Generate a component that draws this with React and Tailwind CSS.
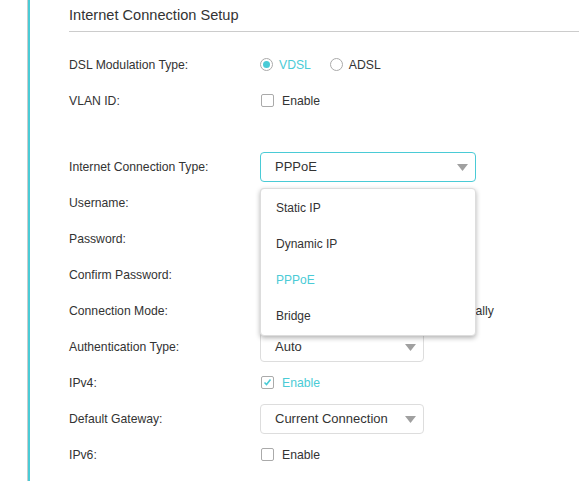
import React from 'react';

const CYAN = '#4acbd6';

const Arrow = () => (
  <svg width="11" height="7" viewBox="0 0 11 7" className="shrink-0">
    <path d="M0 0h11L5.5 7z" fill="#a0a0a0" />
  </svg>
);

const Radio = ({ checked, label }) => (
  <label className="flex items-center gap-[6px]">
    <span className="w-[13px] h-[13px] rounded-full border border-[#aaa] flex items-center justify-center bg-white">
      {checked && <span className="w-[7px] h-[7px] rounded-full bg-[#4acbd6]" />}
    </span>
    <span className={checked ? 'text-[#4acbd6]' : 'text-[#333]'}>{label}</span>
  </label>
);

const Checkbox = ({ checked, label }) => (
  <label className="flex items-center gap-[8px] pl-[1px]">
    <span className="w-[13px] h-[13px] rounded-[2px] border border-[#aaa] flex items-center justify-center bg-white">
      {checked && (
        <svg width="9" height="9" viewBox="0 0 9 9">
          <path d="M1.5 4.5l2 2 4-5" fill="none" stroke={CYAN} strokeWidth="1.6" />
        </svg>
      )}
    </span>
    <span className={checked ? 'text-[#4acbd6]' : 'text-[#333]'}>{label}</span>
  </label>
);

const Select = ({ value, width, active }) => (
  <div
    className={`h-[30px] rounded-[4px] border flex items-center justify-between pl-[14px] pr-[7px] text-[13px] text-[#333] bg-white ${active ? 'border-[#4acbd6]' : 'border-[#ddd]'}`}
    style={{ width }}
  >
    <span>{value}</span>
    <Arrow />
  </div>
);

const Input = () => <div className="w-[164px] h-[30px] rounded-[4px] border border-[#ddd] bg-white" />;

const Row = ({ label, children }) => (
  <div className="h-9 flex items-center">
    <div className="w-[191px] shrink-0 text-[#333]">{label}</div>
    <div className="relative flex items-center">{children}</div>
  </div>
);

export default function App() {
  return (
    <div className="min-h-screen bg-white flex font-['Liberation_Sans',Arial,sans-serif] text-[12.2px]">
      <div className="ml-[27px] w-px bg-[#ccc]" />
      <div className="w-[2px] bg-[#4acbd6]" />
      <div className="flex-1 pl-[39px] min-w-0">
        <div className="h-[32px] border-b border-[#ccc] flex items-center text-[14.6px] text-[#333]">
          Internet Connection Setup
        </div>
        <div className="pt-[15px]">
          <Row label="DSL Modulation Type:">
            <div className="flex items-center gap-[19px]">
              <Radio checked label="VDSL" />
              <Radio label="ADSL" />
            </div>
          </Row>
          <Row label="VLAN ID:">
            <Checkbox label="Enable" />
          </Row>
          <div className="h-[30px]" />
          <Row label="Internet Connection Type:">
            <Select value="PPPoE" width={216} active />
            <div className="absolute left-0 top-[36px] z-10 w-[216px] rounded-[4px] border border-[#ddd] bg-white shadow-[0_2px_5px_rgba(0,0,0,0.3)] py-px text-[12px]">
              {['Static IP', 'Dynamic IP', 'PPPoE', 'Bridge'].map((o) => (
                <div key={o} className={`h-9 flex items-center pl-[15px] ${o === 'PPPoE' ? 'text-[#4acbd6]' : 'text-[#333]'}`}>
                  {o}
                </div>
              ))}
            </div>
          </Row>
          <Row label="Username:">
            <Input />
          </Row>
          <Row label="Password:">
            <Input />
          </Row>
          <Row label="Confirm Password:">
            <Input />
          </Row>
          <Row label="Connection Mode:">
            <div className="flex items-center gap-[40px] whitespace-nowrap">
              <Radio checked label="Always On" />
              <Radio label="Connect Manually" />
            </div>
          </Row>
          <Row label="Authentication Type:">
            <Select value="Auto" width={164} />
          </Row>
          <Row label="IPv4:">
            <Checkbox checked label="Enable" />
          </Row>
          <Row label="Default Gateway:">
            <Select value="Current Connection" width={164} />
          </Row>
          <Row label="IPv6:">
            <Checkbox label="Enable" />
          </Row>
        </div>
      </div>
    </div>
  );
}
